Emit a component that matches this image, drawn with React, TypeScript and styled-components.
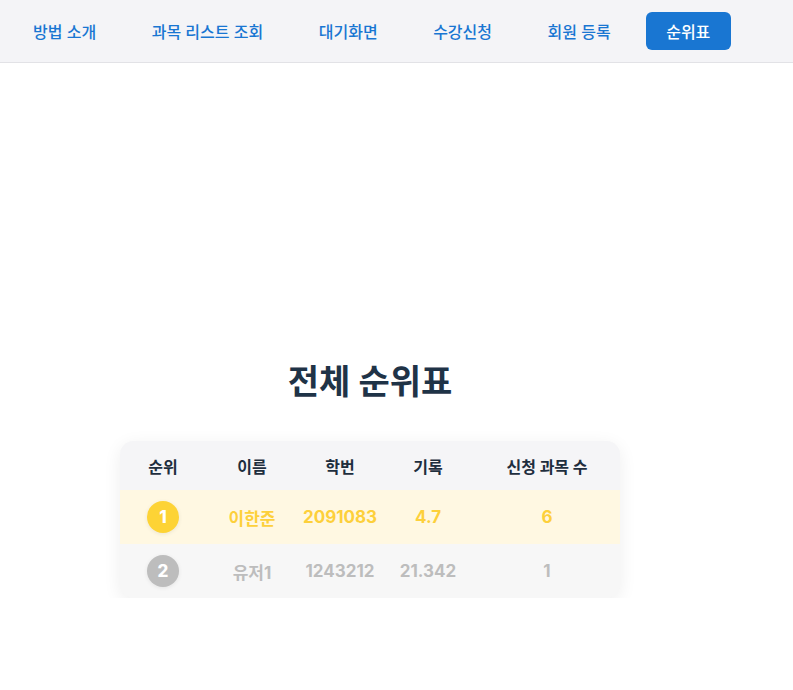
import React from "react";
import styled, { createGlobalStyle } from "styled-components";

const Global = createGlobalStyle`
  html, body { margin: 0; padding: 0; background: #ffffff; }
  body { font-family: "Inter", "Noto Sans CJK KR", "Noto Sans", sans-serif; }
  * { box-sizing: border-box; }
`;

const Nav = styled.nav`
  height: 63px;
  background: #f4f4f7;
  border-bottom: 1px solid #e2e2e6;
  display: flex;
  align-items: center;
  padding: 0 13px;
  gap: 14.5px;
`;

const NavItem = styled.a<{ $active?: boolean }>`
  display: flex;
  align-items: center;
  height: 38px;
  padding: 0 21px 0 20px;
  border-radius: 6px;
  font-size: 16px;
  font-weight: 500;
  text-decoration: none;
  cursor: pointer;
  color: ${(p) => (p.$active ? "#ffffff" : "#1976d2")};
  background: ${(p) => (p.$active ? "#1976d2" : "transparent")};
`;

const Main = styled.main`
  width: 740px;
  padding-top: 296px;
  display: flex;
  flex-direction: column;
  align-items: center;
`;

const Title = styled.h1`
  margin: 0 0 36px;
  font-size: 34px;
  font-weight: 700;
  color: #1f3347;
  line-height: 46px;
`;

const Card = styled.div`
  width: 500px;
  border-radius: 14px;
  overflow: hidden;
  background: #f7f7f7;
  box-shadow: 0 4px 18px rgba(0, 0, 0, 0.07);
`;

const Table = styled.table`
  width: 100%;
  border-collapse: collapse;
  table-layout: fixed;
`;

const Th = styled.th`
  height: 49px;
  background: #f5f5f7;
  color: #1e2e3e;
  font-size: 16px;
  font-weight: 700;
  text-align: center;
  padding: 0;
`;

const Tr = styled.tr<{ $bg: string }>`
  background: ${(p) => p.$bg};
`;

const Td = styled.td<{ $color: string; $h: number }>`
  height: ${(p) => p.$h}px;
  color: ${(p) => p.$color};
  font-size: 17px;
  font-weight: 700;
  text-align: center;
  padding: 0;
`;

const Badge = styled.span<{ $bg: string }>`
  display: inline-flex;
  align-items: center;
  justify-content: center;
  width: 32px;
  height: 32px;
  border-radius: 50%;
  background: ${(p) => p.$bg};
  color: #ffffff;
  font-size: 17px;
  font-weight: 800;
  box-shadow: 0 1px 4px rgba(0, 0, 0, 0.08);
`;

const rows = [
  { rank: 1, name: "이한준", id: "2091083", rec: "4.7", n: "6", color: "#fdd03b", bg: "#fff8e2", badge: "#fdd335", h: 54 },
  { rank: 2, name: "유저1", id: "1243212", rec: "21.342", n: "1", color: "#bdbdbd", bg: "#f7f7f7", badge: "#bdbdbd", h: 54 },
];

export default function App() {
  const navs = ["방법 소개", "과목 리스트 조회", "대기화면", "수강신청", "회원 등록", "순위표"];
  return (
    <>
      <Global />
      <Nav>
        {navs.map((n) => (
          <NavItem key={n} $active={n === "순위표"}>
            {n}
          </NavItem>
        ))}
      </Nav>
      <Main>
        <Title>전체 순위표</Title>
        <Card>
          <Table>
            <colgroup>
              <col style={{ width: 86 }} />
              <col style={{ width: 92 }} />
              <col style={{ width: 84 }} />
              <col style={{ width: 92 }} />
              <col />
            </colgroup>
            <thead>
              <tr>
                <Th>순위</Th>
                <Th>이름</Th>
                <Th>학번</Th>
                <Th>기록</Th>
                <Th>신청 과목 수</Th>
              </tr>
            </thead>
            <tbody>
              {rows.map((r) => (
                <Tr key={r.rank} $bg={r.bg}>
                  <Td $color={r.color} $h={r.h}>
                    <Badge $bg={r.badge}>{r.rank}</Badge>
                  </Td>
                  <Td $color={r.color} $h={r.h}>{r.name}</Td>
                  <Td $color={r.color} $h={r.h}>{r.id}</Td>
                  <Td $color={r.color} $h={r.h}>{r.rec}</Td>
                  <Td $color={r.color} $h={r.h}>{r.n}</Td>
                </Tr>
              ))}
            </tbody>
          </Table>
        </Card>
      </Main>
    </>
  );
}
